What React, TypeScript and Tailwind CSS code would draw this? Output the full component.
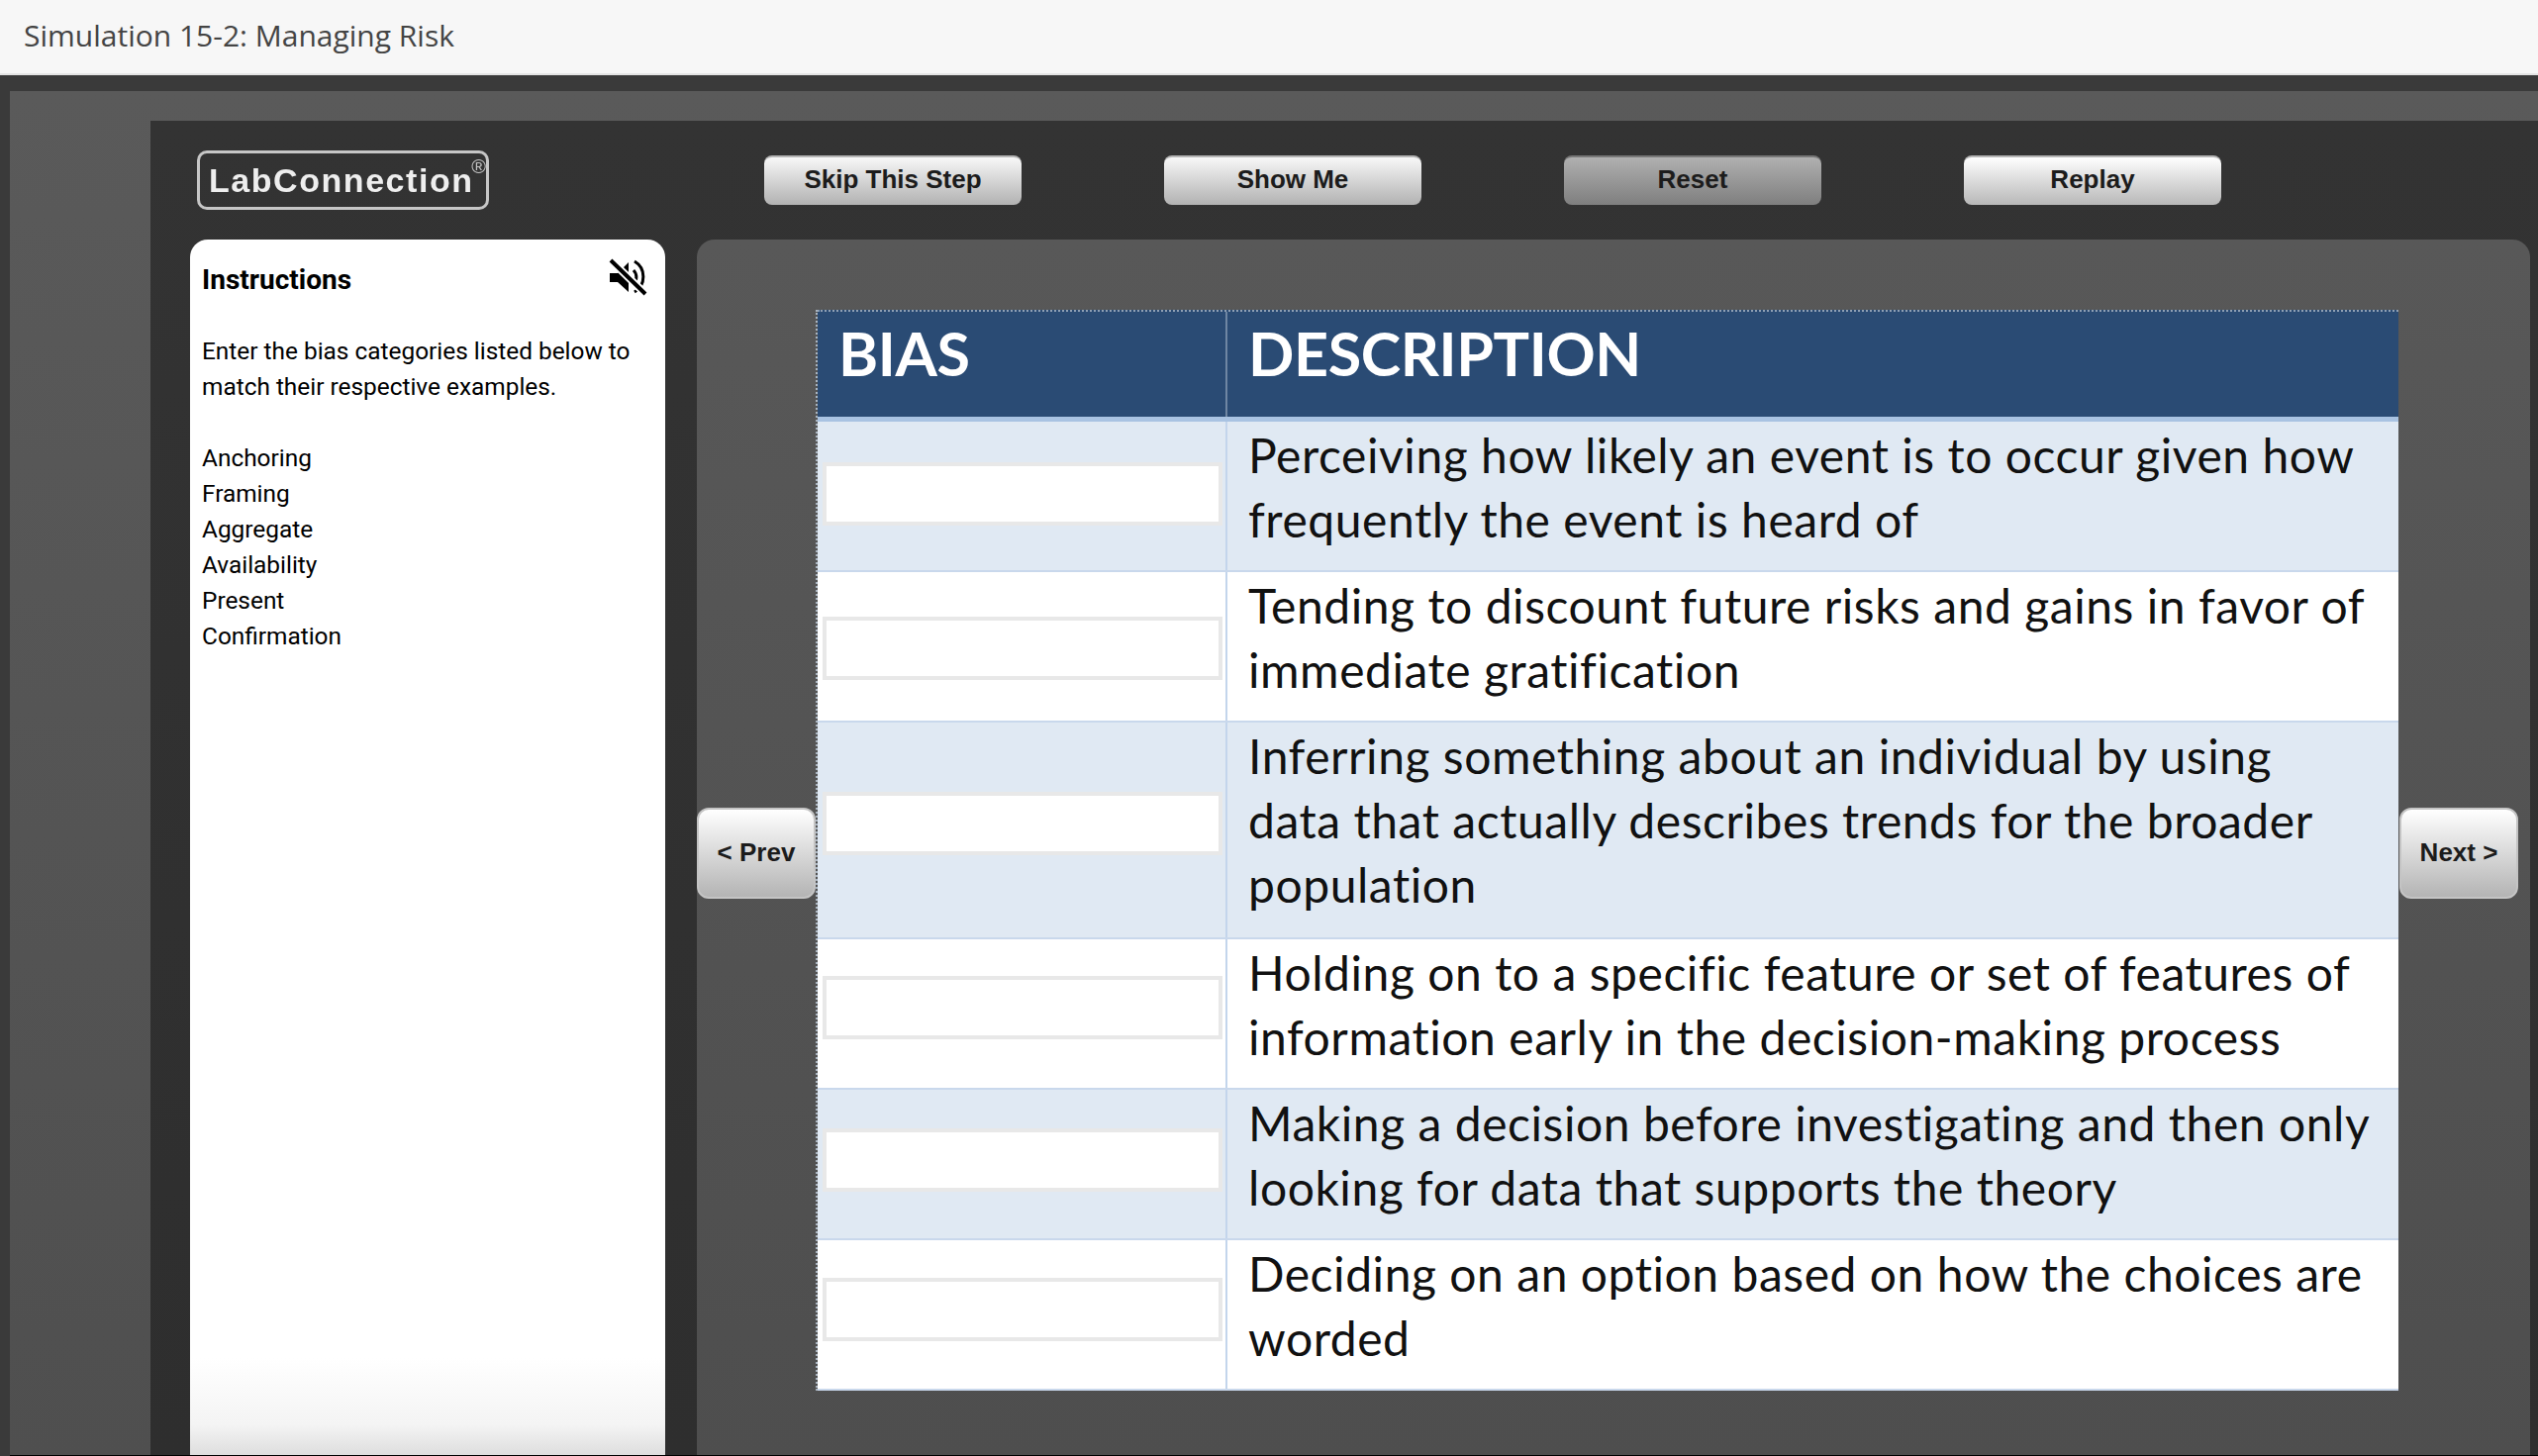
const rows = [
  {
    lines: ["Perceiving how likely an event is to occur given how", "frequently the event is heard of"],
    row: "h-[152px] bg-[#e0e9f3]",
    input: "mt-[41px]",
  },
  {
    lines: ["Tending to discount future risks and gains in favor of", "immediate gratification"],
    row: "h-[152px] bg-white",
    input: "mt-[45px]",
  },
  {
    lines: [
      "Inferring something about an individual by using",
      "data that actually describes trends for the broader",
      "population",
    ],
    row: "h-[219px] bg-[#e0e9f3]",
    input: "mt-[70px]",
  },
  {
    lines: ["Holding on to a specific feature or set of features of", "information early in the decision-making process"],
    row: "h-[152px] bg-white",
    input: "mt-[37px]",
  },
  {
    lines: ["Making a decision before investigating and then only", "looking for data that supports the theory"],
    row: "h-[152px] bg-[#e0e9f3]",
    input: "mt-[39px]",
  },
  {
    lines: ["Deciding on an option based on how the choices are", "worded"],
    row: "h-[152px] bg-white",
    input: "mt-[38px]",
  },
];

const topButtons = [
  { label: "Skip This Step", color: "from-[#f8f8f8] to-[#b2b2b2] border-t-[#b5b5b5]" },
  { label: "Show Me", color: "from-[#f8f8f8] to-[#b2b2b2] border-t-[#b5b5b5]" },
  { label: "Reset", color: "from-[#b0b0b0] to-[#7f7f7f] border-t-[#777777]" },
  { label: "Replay", color: "from-[#ffffff] to-[#b8b8b8] border-t-[#b5b5b5]" },
];

function MutedIcon() {
  return (
    <svg width="40" height="40" viewBox="0 0 40 40">
      <path d="M2 16h8l11-11v30l-11-10H2z" fill="#000" />
      <path d="M26 13a10 10 0 0 1 0 14" fill="none" stroke="#000" strokeWidth="3" />
      <path d="M27 4a18 18 0 0 1 0 31" fill="none" stroke="#000" strokeWidth="3" />
      <path d="M3 3l35 34" stroke="#fff" strokeWidth="8" />
      <path d="M3 3l35 34" stroke="#000" strokeWidth="4" />
    </svg>
  );
}

function SideButton({ label }: { label: string }) {
  return (
    <button className="mt-[503px] flex h-[92px] w-[120px] shrink-0 items-center justify-center rounded-xl border-2 border-[#c4c4c4] bg-gradient-to-b from-white to-[#b4b4b4] pb-[2px] font-['Liberation_Sans',sans-serif] text-[26px] font-bold text-[#1c1c1c]">
      {label}
    </button>
  );
}

export default function App() {
  return (
    <div className="flex h-[1471px] w-full flex-col overflow-hidden bg-[#3a3a3a]">
      {/* Title bar */}
      <header className="flex h-[76px] shrink-0 items-center border-b-2 border-[#e4e4e4] bg-[#f7f7f7] pb-[4px] pl-6">
        <h1 className="font-['Open_Sans',sans-serif] text-[30px] text-[#444444]">Simulation 15-2: Managing Risk</h1>
      </header>

      <div className="ml-[10px] mt-4 flex min-h-0 flex-1 flex-col border-b border-black bg-gradient-to-b from-[#5a5a5a] to-[#4f4f4f] pl-[142px] pt-[30px]">
        <div className="flex min-h-0 flex-1 flex-col bg-gradient-to-b from-[#333333] to-[#2e2e2e]">
          {/* Toolbar */}
          <div className="flex h-[120px] shrink-0 items-start pt-[30px]">
            <div className="relative ml-[47px] flex h-[60px] w-[295px] items-center rounded-[10px] border-[3px] border-[#c6c6c6] pl-[9px] font-['Liberation_Sans',sans-serif] text-[34px] font-bold tracking-[1.55px] text-[#eeeeee] blur-[0.6px]">
              LabConnection
              <span className="absolute right-0 top-[-2px] text-[20px] font-normal tracking-normal text-[#c4c4c4]">®</span>
            </div>
            <div className="ml-[278px] mt-[5px] flex gap-[144px]">
              {topButtons.map((b) => (
                <button
                  key={b.label}
                  className={`flex h-[50px] w-[260px] items-center justify-center rounded-lg border-t-2 bg-gradient-to-b pb-[3px] font-['Liberation_Sans',sans-serif] text-[26px] font-bold text-[#1c1c1c] ${b.color}`}
                >
                  {b.label}
                </button>
              ))}
            </div>
          </div>

          <div className="flex min-h-0 flex-1 gap-8 pl-10 pr-2">
            {/* Instructions */}
            <aside className="w-[480px] shrink-0 rounded-t-[18px] bg-gradient-to-b from-white from-[92%] via-[#f4f4f4] via-[97.5%] to-[#dedede] pl-3 pt-[13px] font-['Roboto',sans-serif] text-black">
              <div className="flex h-[82px] items-start justify-between pr-[18px]">
                <h2 className="pt-[8px] text-[28px] font-bold leading-[40px]">Instructions</h2>
                <div className="pt-[5px]">
                  <MutedIcon />
                </div>
              </div>
              <div className="text-[24.4px] leading-[36px]">
                <p>Enter the bias categories listed below to</p>
                <p>match their respective examples.</p>
                <ul className="mt-9">
                  {["Anchoring", "Framing", "Aggregate", "Availability", "Present", "Confirmation"].map((b) => (
                    <li key={b}>{b}</li>
                  ))}
                </ul>
              </div>
            </aside>

            {/* Worksheet */}
            <main className="flex min-w-0 flex-1 items-start rounded-t-[18px] bg-gradient-to-b from-[#585858] to-[#4e4e4e] pt-[71px]">
              <SideButton label="< Prev" />
              <div className="mr-px w-[1599px] shrink-0 border-l-2 border-dotted border-[#a9b4c0] font-['Lato',sans-serif]">
                <div className="flex h-[108px] border-t-2 border-dotted border-[#8fa0b4] bg-[#2a4b74] text-[61px] font-bold tracking-[-0.4px] text-white">
                  <div className="w-[414px] shrink-0 border-r-2 border-[#6f86a3] pl-[21px] leading-[84px]">BIAS</div>
                  <div className="pl-[21px] leading-[84px]">DESCRIPTION</div>
                </div>
                <div className="h-[5px] bg-[#a9c3e2]" />
                {rows.map((r) => (
                  <div key={r.lines[0]} className={`flex border-b-2 border-[#c9d8ec] ${r.row}`}>
                    <div className="w-[414px] shrink-0 border-r-2 border-[#c3d5ec] pl-[5px]">
                      <input
                        type="text"
                        aria-label="Bias"
                        className={`block h-[64px] w-[404px] border-4 border-[#e8e8e8] bg-white ${r.input}`}
                      />
                    </div>
                    <div className="pl-[21px] pt-[1px] text-[48px] leading-[65px] tracking-[0.55px] text-[#111111]">
                      {r.lines.map((line) => (
                        <div key={line} className="whitespace-nowrap">
                          {line}
                        </div>
                      ))}
                    </div>
                  </div>
                ))}
              </div>
              <SideButton label="Next >" />
            </main>
          </div>
        </div>
      </div>
    </div>
  );
}
